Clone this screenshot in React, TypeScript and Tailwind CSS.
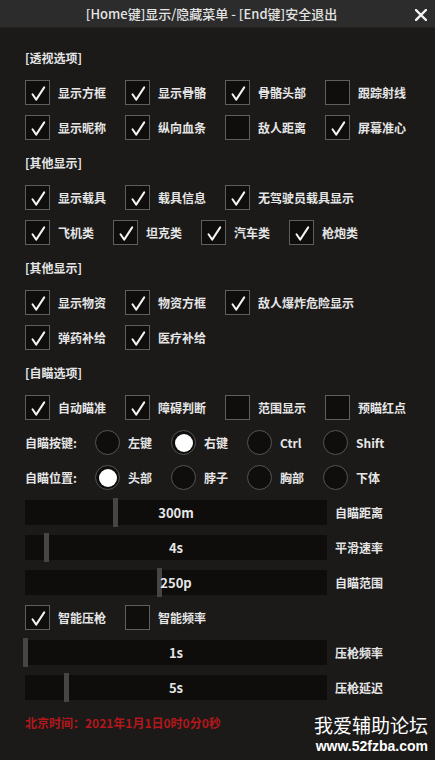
import React from "react";

const FONT = { fontFamily: '"Noto Sans CJK SC", "Noto Sans", sans-serif' };

function CheckMark() {
  return (
    <svg width="25" height="25" viewBox="0 0 25 25" className="absolute left-0 top-0">
      <path d="M6.5 13.2 L10.2 18.6 L18.2 6.4" fill="none" stroke="#f4f4f4" strokeWidth="2" strokeLinecap="round" strokeLinejoin="round" />
    </svg>
  );
}

function Check({ label, checked, w }: { label: string; checked: boolean; w: string }) {
  return (
    <div className={`flex h-[25px] shrink-0 items-center ${w}`}>
      <div className="relative h-[25px] w-[25px] shrink-0 border border-[#5e5e5e] bg-[#0f0e0d]">
        {checked && <CheckMark />}
      </div>
      <span className="ml-[8px] whitespace-nowrap text-[12px] font-bold leading-none text-[#e6e6e6]">{label}</span>
    </div>
  );
}

function Radio({ label, on }: { label: string; on: boolean }) {
  return (
    <div className="flex h-[25px] w-[76px] shrink-0 items-center">
      <div className="flex h-[25px] w-[25px] shrink-0 items-center justify-center rounded-full border border-[#555555] bg-[#0f0e0d]">
        {on && <div className="h-[18px] w-[18px] rounded-full bg-white" />}
      </div>
      <span className="ml-[8px] whitespace-nowrap text-[12px] font-bold leading-none text-[#e6e6e6]">{label}</span>
    </div>
  );
}

function Slider({ value, label, pos }: { value: string; label: string; pos: number }) {
  return (
    <div className="flex h-[25px] items-center">
      <div className="relative flex h-[25px] w-[302px] shrink-0 items-center justify-center bg-[#0e0d0c]">
        <div className="absolute top-[-2px] h-[29px] w-[5px] bg-[#454545]" style={{ left: pos }} />
        <span className="relative text-[13px] font-bold leading-none text-[#e6e6e6]">{value}</span>
      </div>
      <span className="ml-[8px] whitespace-nowrap text-[12px] font-bold leading-none text-[#e6e6e6]">{label}</span>
    </div>
  );
}

function Section({ title }: { title: string }) {
  return (
    <div className="flex h-[25px] items-center text-[12px] font-bold leading-none text-[#e6e6e6]">{title}</div>
  );
}

export default function App() {
  return (
    <div className="relative min-h-[760px] w-[435px] overflow-hidden bg-[#1b1a19]" style={FONT}>
      <div className="flex h-[28px] items-center justify-center border-b border-[#222322] bg-[#2b2c2b] pr-[12px]">
        <span className="whitespace-nowrap text-[13px] font-medium leading-none text-[#e4e4e4]">[Home键]显示/隐藏菜单 - [End键]安全退出</span>
        <svg width="12" height="12" viewBox="0 0 12 12" className="absolute right-[8px] top-[9px]">
          <path d="M1 1 L11 11 M11 1 L1 11" stroke="#f2f2f2" strokeWidth="2.4" strokeLinecap="square" />
        </svg>
      </div>

      <div className="flex flex-col gap-[10px] px-[25px] pt-[17px]">
        <Section title="[透视选项]" />
        <div className="flex">
          <Check label="显示方框" checked w="w-[100px]" />
          <Check label="显示骨骼" checked w="w-[100px]" />
          <Check label="骨骼头部" checked w="w-[100px]" />
          <Check label="跟踪射线" checked={false} w="w-[100px]" />
        </div>
        <div className="flex">
          <Check label="显示昵称" checked w="w-[100px]" />
          <Check label="纵向血条" checked w="w-[100px]" />
          <Check label="敌人距离" checked={false} w="w-[100px]" />
          <Check label="屏幕准心" checked w="w-[100px]" />
        </div>

        <Section title="[其他显示]" />
        <div className="flex">
          <Check label="显示载具" checked w="w-[100px]" />
          <Check label="载具信息" checked w="w-[100px]" />
          <Check label="无驾驶员载具显示" checked w="w-[160px]" />
        </div>
        <div className="flex">
          <Check label="飞机类" checked w="w-[88px]" />
          <Check label="坦克类" checked w="w-[88px]" />
          <Check label="汽车类" checked w="w-[88px]" />
          <Check label="枪炮类" checked w="w-[88px]" />
        </div>

        <Section title="[其他显示]" />
        <div className="flex">
          <Check label="显示物资" checked w="w-[100px]" />
          <Check label="物资方框" checked w="w-[100px]" />
          <Check label="敌人爆炸危险显示" checked w="w-[160px]" />
        </div>
        <div className="flex">
          <Check label="弹药补给" checked w="w-[100px]" />
          <Check label="医疗补给" checked w="w-[100px]" />
        </div>

        <Section title="[自瞄选项]" />
        <div className="flex">
          <Check label="自动瞄准" checked w="w-[100px]" />
          <Check label="障碍判断" checked w="w-[100px]" />
          <Check label="范围显示" checked={false} w="w-[100px]" />
          <Check label="预瞄红点" checked={false} w="w-[100px]" />
        </div>
        <div className="flex items-center">
          <span className="w-[70px] shrink-0 whitespace-nowrap text-[12px] font-bold leading-none text-[#e6e6e6]">自瞄按键:</span>
          <Radio label="左键" on={false} />
          <Radio label="右键" on />
          <Radio label="Ctrl" on={false} />
          <Radio label="Shift" on={false} />
        </div>
        <div className="flex items-center">
          <span className="w-[70px] shrink-0 whitespace-nowrap text-[12px] font-bold leading-none text-[#e6e6e6]">自瞄位置:</span>
          <Radio label="头部" on />
          <Radio label="脖子" on={false} />
          <Radio label="胸部" on={false} />
          <Radio label="下体" on={false} />
        </div>

        <Slider value="300m" label="自瞄距离" pos={88} />
        <Slider value="4s" label="平滑速率" pos={19} />
        <Slider value="250p" label="自瞄范围" pos={132} />

        <div className="flex">
          <Check label="智能压枪" checked w="w-[100px]" />
          <Check label="智能频率" checked={false} w="w-[100px]" />
        </div>

        <Slider value="1s" label="压枪频率" pos={-2} />
        <Slider value="5s" label="压枪延迟" pos={39} />

        <div className="flex h-[25px] items-center">
          <span className="whitespace-nowrap text-[12px] font-bold leading-none text-[#b3171a]">北京时间：2021年1月1日0时0分0秒</span>
        </div>
      </div>

      <div className="absolute bottom-[7px] right-[7px] flex flex-col items-end">
        <span className="whitespace-nowrap text-[19px] leading-none text-white">我爱辅助论坛</span>
        <span className="mt-[5px] whitespace-nowrap text-[14px] font-bold leading-none text-white" style={{ fontFamily: '"Liberation Sans", Arial, sans-serif' }}>www.52fzba.com</span>
      </div>
    </div>
  );
}
